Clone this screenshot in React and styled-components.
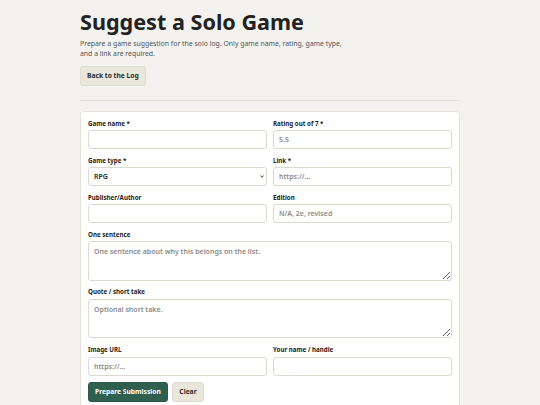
import React from 'react';
import styled, { createGlobalStyle } from 'styled-components';

const GlobalStyle = createGlobalStyle`
  * { box-sizing: border-box; }
  body {
    margin: 0;
    background: #f4f2ee;
    font-family: "Noto Sans", "Open Sans", sans-serif;
    color: #222;
  }
`;

const Page = styled.main`
  width: 380px;
  margin: 0 auto;
  padding-top: 10px;
`;

const Title = styled.h1`
  margin: 0;
  font-size: 21.6px;
  line-height: 24px;
  font-weight: 700;
  color: #222;
`;

const Intro = styled.p`
  margin: 5px 0 0;
  font-size: 6.9px;
  line-height: 10px;
  color: #555;
  white-space: nowrap;
`;

const Button = styled.button`
  display: block;
  height: 19.5px;
  padding: 0 6px;
  border-radius: 3px;
  font-family: inherit;
  font-size: 6.7px;
  font-weight: 700;
  white-space: nowrap;
  cursor: pointer;
  border: 1px solid ${p => (p.$primary ? '#2b5a4a' : '#e2dbcf')};
  background: ${p => (p.$primary ? '#2f5f4f' : '#ebe6dc')};
  color: ${p => (p.$primary ? '#fff' : '#2a2a2a')};
`;

const BackButton = styled(Button)`
  margin-top: 7px;
`;

const Rule = styled.hr`
  border: 0;
  border-top: 1px solid #e2ded6;
  margin: 14px 0 10px;
`;

const Card = styled.form`
  background: #fff;
  border: 1px solid #e6e2da;
  border-radius: 4px;
  padding: 7px 7px 12px;
`;

const Grid = styled.div`
  display: grid;
  grid-template-columns: 1fr 1fr;
  column-gap: 6px;
  row-gap: 6.5px;
`;

const Field = styled.label`
  display: flex;
  flex-direction: column;
  grid-column: ${p => (p.$wide ? '1 / -1' : 'auto')};
`;

const LabelText = styled.span`
  font-size: 6.2px;
  line-height: 9px;
  font-weight: 700;
  color: #222;
  margin-bottom: 2.6px;
`;

const fieldBox = `
  display: block;
  width: 100%;
  border: 1px solid #ddd9d1;
  border-radius: 3px;
  background: #fff;
  font-family: "Noto Sans", "Open Sans", sans-serif;
  font-size: 7px;
  font-weight: 600;
  color: #222;
  padding: 0 5px;
  outline: none;
  &::placeholder { color: #8a8a8a; opacity: 1; }
`;

const Input = styled.input`
  ${fieldBox}
  height: 19px;
`;

const SelectWrap = styled.div`
  position: relative;
  height: 19px;
`;

const Select = styled.select`
  ${fieldBox}
  height: 19px;
  padding: 0 5px;
  appearance: none;
  -webkit-appearance: none;
`;

const Chevron = styled.svg`
  position: absolute;
  right: 3px;
  top: 8px;
  width: 4px;
  height: 3px;
  pointer-events: none;
`;

const TextArea = styled.textarea`
  ${fieldBox}
  height: 39.5px;
  padding: 5px 5px;
  resize: vertical;
  line-height: 9px;
`;

const Actions = styled.div`
  display: flex;
  gap: 4.5px;
  margin-top: 6.5px;
`;

export default function App() {
  return (
    <>
      <GlobalStyle />
      <Page>
        <Title>Suggest a Solo Game</Title>
        <Intro>
          Prepare a game suggestion for the solo log. Only game name, rating, game type,
          <br />
          and a link are required.
        </Intro>
        <BackButton type="button">Back to the Log</BackButton>
        <Rule />
        <Card onSubmit={e => e.preventDefault()}>
          <Grid>
            <Field>
              <LabelText>Game name *</LabelText>
              <Input type="text" />
            </Field>
            <Field>
              <LabelText>Rating out of 7 *</LabelText>
              <Input type="text" placeholder="5.5" />
            </Field>
            <Field>
              <LabelText>Game type *</LabelText>
              <SelectWrap>
                <Select defaultValue="RPG">
                  <option>RPG</option>
                  <option>Wargame</option>
                  <option>Board game</option>
                </Select>
                <Chevron viewBox="0 0 4 3">
                  <path d="M0.4 0.5 L2 2.3 L3.6 0.5" fill="none" stroke="#333" strokeWidth="0.9" />
                </Chevron>
              </SelectWrap>
            </Field>
            <Field>
              <LabelText>Link *</LabelText>
              <Input type="text" placeholder="https://..." />
            </Field>
            <Field>
              <LabelText>Publisher/Author</LabelText>
              <Input type="text" />
            </Field>
            <Field>
              <LabelText>Edition</LabelText>
              <Input type="text" placeholder="N/A, 2e, revised" />
            </Field>
            <Field $wide>
              <LabelText>One sentence</LabelText>
              <TextArea placeholder="One sentence about why this belongs on the list." />
            </Field>
            <Field $wide>
              <LabelText>Quote / short take</LabelText>
              <TextArea placeholder="Optional short take." />
            </Field>
            <Field>
              <LabelText>Image URL</LabelText>
              <Input type="text" placeholder="https://..." />
            </Field>
            <Field>
              <LabelText>Your name / handle</LabelText>
              <Input type="text" />
            </Field>
          </Grid>
          <Actions>
            <Button type="submit" $primary>Prepare Submission</Button>
            <Button type="button">Clear</Button>
          </Actions>
        </Card>
      </Page>
    </>
  );
}
